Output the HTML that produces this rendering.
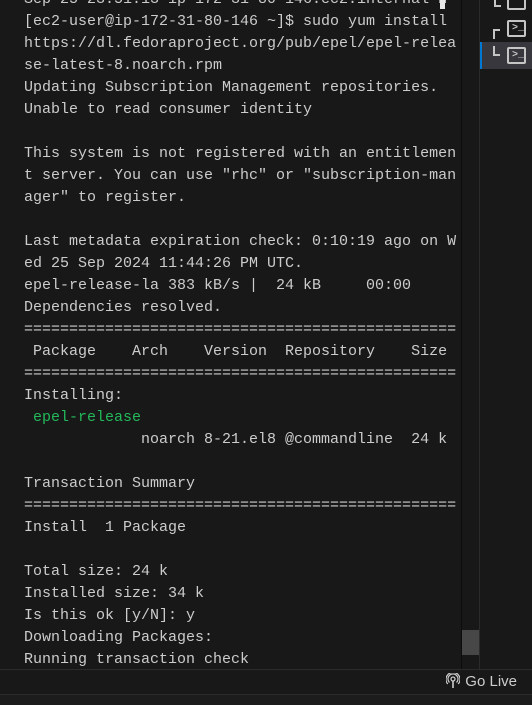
<!DOCTYPE html>
<html><head><style>
html,body{margin:0;padding:0;width:532px;height:705px;overflow:hidden;background:#181818;}
#term{position:absolute;left:0;top:0;width:461px;height:669px;overflow:hidden;background:#181818;}
pre{position:absolute;left:24px;top:-11px;margin:0;font-family:"Liberation Mono",monospace;font-size:15px;line-height:22px;color:#cccccc;}
.g{color:#23b85a;}
#vline{position:absolute;left:461px;top:0;width:1px;height:669px;background:#0c0c0c;}
#sb{position:absolute;left:462px;top:630px;width:17px;height:25px;background:#474747;}
#pline{position:absolute;left:479px;top:0;width:1px;height:669px;background:#2b2b2b;}
#sel{position:absolute;left:480px;top:42px;width:52px;height:27px;background:#37373d;border-left:2px solid #0078d4;box-sizing:border-box;}
.ico{position:absolute;width:19px;height:17px;border:2px solid #c5c5c5;border-radius:2px;box-sizing:border-box;}
.tree{position:absolute;border-color:#c5c5c5;border-style:solid;width:5px;height:8px;}
.p{position:absolute;left:3px;top:2px;font:bold 10px 'Liberation Mono';color:#c5c5c5;line-height:9px}
#status{position:absolute;left:0;top:669px;width:532px;height:26px;border-top:1px solid #2b2b2b;border-bottom:1px solid #2b2b2b;background:#181818;box-sizing:border-box;}
#golive{position:absolute;right:15px;top:3px;font-family:"Liberation Sans",sans-serif;font-size:15px;color:#cccccc;}
#below{position:absolute;left:0;top:695px;width:532px;height:10px;background:#1c1c1c;}
</style></head><body>
<div id="term"><pre>Sep 25 23:51:13 ip-172-31-80-146.ec2.internal N
[ec2-user@ip-172-31-80-146 ~]$ sudo yum install
https://dl.fedoraproject.org/pub/epel/epel-relea
se-latest-8.noarch.rpm
Updating Subscription Management repositories.
Unable to read consumer identity

This system is not registered with an entitlemen
t server. You can use "rhc" or "subscription-man
ager" to register.

Last metadata expiration check: 0:10:19 ago on W
ed 25 Sep 2024 11:44:26 PM UTC.
epel-release-la 383 kB/s |  24 kB     00:00
Dependencies resolved.
================================================
 Package    Arch    Version  Repository    Size
================================================
Installing:
 <span class="g">epel-release</span>
             noarch 8-21.el8 @commandline  24 k

Transaction Summary
================================================
Install  1 Package

Total size: 24 k
Installed size: 34 k
Is this ok [y/N]: y
Downloading Packages:
Running transaction check</pre></div>
<div style="position:absolute;left:440px;top:0;width:5px;height:9px;background:#e8e8e8"></div>
<div id="vline"></div><div id="sb"></div><div id="pline"></div>
<div id="sel"></div>
<div class="tree" style="left:494px;top:0;border-width:0 0 2px 2px;height:5px"></div>
<div class="ico" style="left:507px;top:-7px"></div>
<div class="tree" style="left:493px;top:29px;border-width:2px 0 0 2px"></div>
<div class="ico" style="left:507px;top:20px"><div class="p">&gt;_</div></div>
<div class="tree" style="left:493px;top:46px;border-width:0 0 2px 2px"></div>
<div class="ico" style="left:507px;top:47px"><div class="p">&gt;_</div></div>
<div id="status"><div id="golive"><svg width="14" height="16" viewBox="0 0 14 16" style="vertical-align:-3px;margin-right:5px"><circle cx="7" cy="6" r="2" fill="none" stroke="#ccc" stroke-width="1.3"/><path d="M3.5 9.5A5 5 0 1 1 10.5 9.5M1.8 11A7 7 0 1 1 12.2 11" fill="none" stroke="#ccc" stroke-width="1.2"/><path d="M7 8v7" stroke="#ccc" stroke-width="1.6"/></svg>Go Live</div></div>
<div id="below"></div>
</body></html>
